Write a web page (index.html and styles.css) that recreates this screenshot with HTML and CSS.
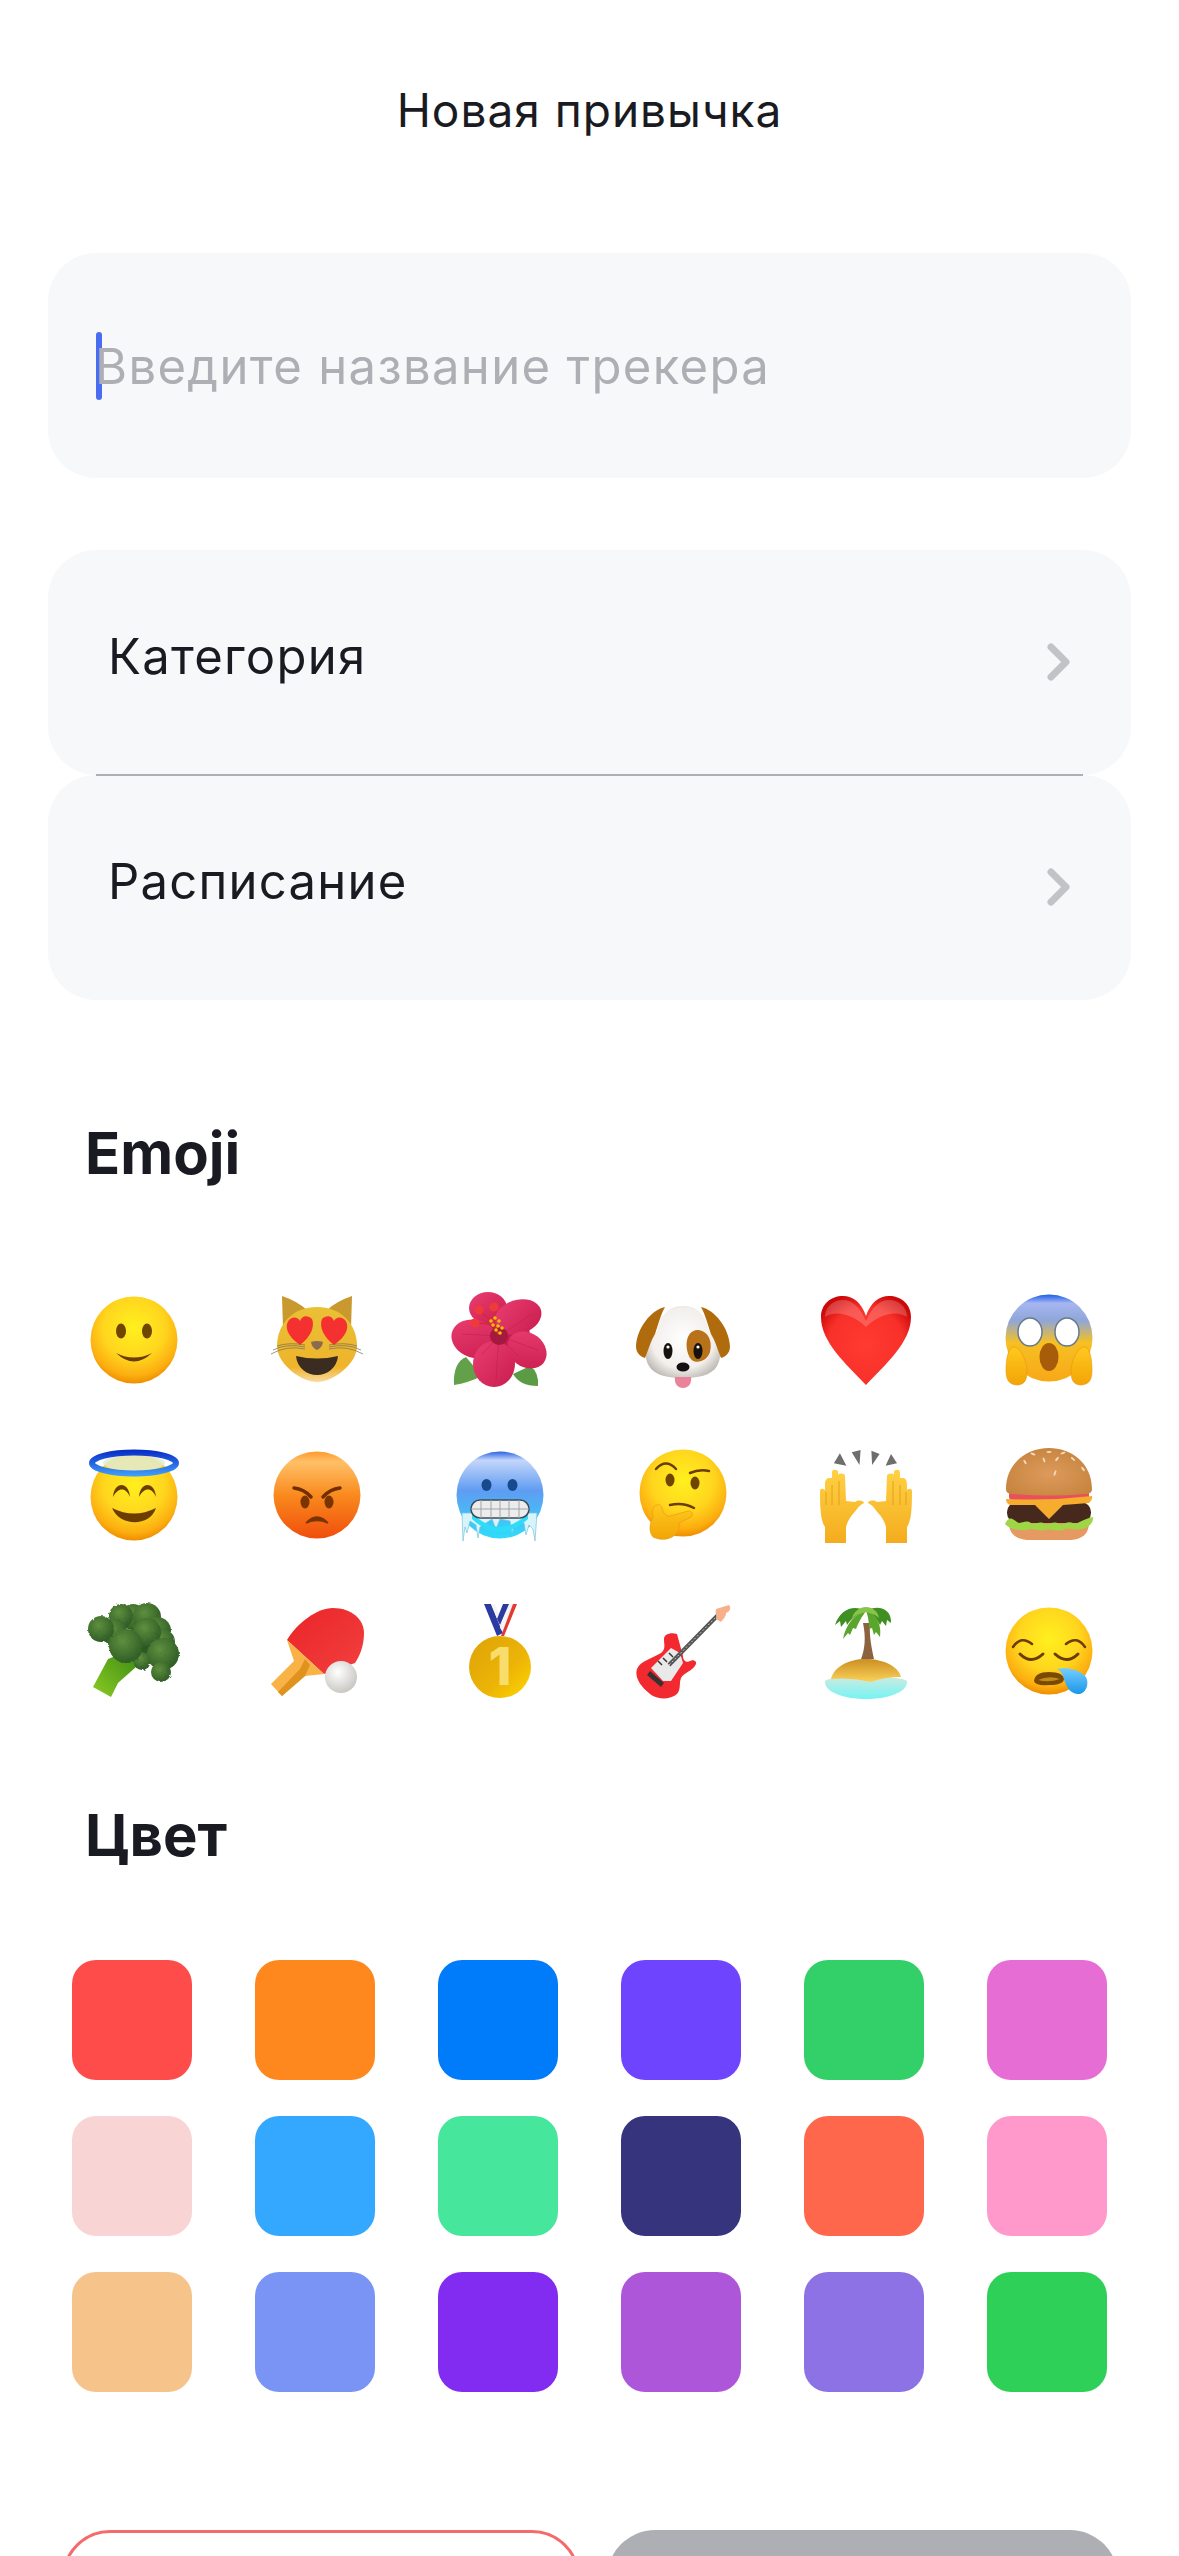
FILE: index.html
```html
<!DOCTYPE html>
<html lang="ru">

<head>
    <meta charset="UTF-8">
    <meta name="viewport" content="width=device-width, initial-scale=1.0">
    <title>Новая привычка</title>

    <link rel="stylesheet" href="styles.css">
</head>

<body>
    <!-- shared gradients for the emoji -->
    <svg class="defs" aria-hidden="true">
        <defs>
            <radialGradient id="face" cx="50%" cy="36%" r="64%">
                <stop offset="0" stop-color="#fff01e" />
                <stop offset=".55" stop-color="#ffd61e" />
                <stop offset=".86" stop-color="#fcae10" />
                <stop offset="1" stop-color="#ee8e00" />
            </radialGradient>
            <linearGradient id="angry" x1="0" y1="0" x2="0" y2="1">
                <stop offset="0" stop-color="#ff9a2e" />
                <stop offset=".12" stop-color="#ffc066" />
                <stop offset=".5" stop-color="#f98a1e" />
                <stop offset="1" stop-color="#f04e0c" />
            </linearGradient>
            <linearGradient id="cold" x1="0" y1="0" x2="0" y2="1">
                <stop offset="0" stop-color="#2a62e6" />
                <stop offset=".1" stop-color="#c4d6fa" />
                <stop offset=".45" stop-color="#5f9cf2" />
                <stop offset="1" stop-color="#2edcfa" />
            </linearGradient>
            <linearGradient id="scream" x1="0" y1="0" x2="0" y2="1">
                <stop offset="0" stop-color="#1c5ce8" />
                <stop offset=".1" stop-color="#a6b6f2" />
                <stop offset=".3" stop-color="#8fa6d8" />
                <stop offset=".55" stop-color="#f6c024" />
                <stop offset="1" stop-color="#f8a816" />
            </linearGradient>
            <linearGradient id="hand" x1="0" y1="0" x2="0" y2="1">
                <stop offset="0" stop-color="#ffc91f" />
                <stop offset="1" stop-color="#f2a406" />
            </linearGradient>
            <linearGradient id="raised" gradientUnits="userSpaceOnUse" x1="0" y1="25" x2="0" y2="100">
                <stop offset="0" stop-color="#ffd146" />
                <stop offset="1" stop-color="#f3ab1c" />
            </linearGradient>
            <linearGradient id="cat" x1="0" y1="0" x2="0" y2="1">
                <stop offset="0" stop-color="#e9c034" />
                <stop offset=".8" stop-color="#eeb42c" />
                <stop offset="1" stop-color="#fbd9a0" />
            </linearGradient>
            <linearGradient id="petal" x1="0" y1="0" x2="1" y2="1">
                <stop offset="0" stop-color="#ea3d70" />
                <stop offset="1" stop-color="#c91d50" />
            </linearGradient>
            <radialGradient id="dog" cx="50%" cy="45%" r="60%">
                <stop offset="0" stop-color="#ffffff" />
                <stop offset=".7" stop-color="#f2efec" />
                <stop offset="1" stop-color="#bdb8b2" />
            </radialGradient>
            <radialGradient id="heart" cx="50%" cy="55%" r="60%">
                <stop offset="0" stop-color="#ff3b30" />
                <stop offset=".7" stop-color="#f8302a" />
                <stop offset="1" stop-color="#cc0a0a" />
            </radialGradient>
            <linearGradient id="halo" gradientUnits="userSpaceOnUse" x1="0" y1="6" x2="0" y2="30">
                <stop offset="0" stop-color="#0a2ec8" />
                <stop offset="1" stop-color="#3f9cf8" />
            </linearGradient>
            <radialGradient id="bun" cx="50%" cy="55%" r="60%">
                <stop offset="0" stop-color="#dd9a5c" />
                <stop offset="1" stop-color="#c6843e" />
            </radialGradient>
            <radialGradient id="floret" cx="40%" cy="35%" r="70%">
                <stop offset="0" stop-color="#5f8f3e" />
                <stop offset="1" stop-color="#2c5a24" />
            </radialGradient>
            <linearGradient id="stem" x1="0" y1="1" x2="1" y2="0">
                <stop offset="0" stop-color="#8ccb24" />
                <stop offset="1" stop-color="#3f8f14" />
            </linearGradient>
            <linearGradient id="blade" x1="0" y1="0" x2="1" y2="1">
                <stop offset="0" stop-color="#ea2427" />
                <stop offset="1" stop-color="#f24040" />
            </linearGradient>
            <radialGradient id="ball" cx="40%" cy="35%" r="70%">
                <stop offset="0" stop-color="#ffffff" />
                <stop offset="1" stop-color="#c6c4c0" />
            </radialGradient>
            <linearGradient id="gold" x1="0" y1="0" x2="1" y2="1">
                <stop offset="0" stop-color="#dca308" />
                <stop offset=".6" stop-color="#edb407" />
                <stop offset="1" stop-color="#ffd800" />
            </linearGradient>
            <linearGradient id="sand" x1="0" y1="0" x2="0" y2="1">
                <stop offset="0" stop-color="#cc8f20" />
                <stop offset="1" stop-color="#fbd25a" />
            </linearGradient>
            <linearGradient id="sea" x1="0" y1="0" x2="0" y2="1">
                <stop offset="0" stop-color="#cdebe0" />
                <stop offset="1" stop-color="#74f4f4" />
            </linearGradient>
            <linearGradient id="drop" x1="0" y1="0" x2="0" y2="1">
                <stop offset="0" stop-color="#74ccff" />
                <stop offset="1" stop-color="#1a98e8" />
            </linearGradient>
            <filter id="rough" x="-5%" y="-5%" width="110%" height="110%">
                <feTurbulence type="fractalNoise" baseFrequency=".35" numOctaves="2" seed="3" />
                <feDisplacementMap in="SourceGraphic" scale="3" />
            </filter>
        </defs>
    </svg>

    <div class="screen">
        <header class="top-bar">
            <h1 class="top-title">Новая привычка</h1>
        </header>

        <div class="name-field">
            <span class="caret"></span>
            <span class="placeholder">Введите название трекера</span>
        </div>

        <div class="menu">
            <div class="menu-row">
                <span class="menu-label">Категория</span>
                <svg class="chevron" viewBox="0 0 24 40">
                    <path d="M4 4 L19 19 L4 34" />
                </svg>
            </div>
            <div class="menu-row with-line">
                <span class="menu-label">Расписание</span>
                <svg class="chevron" viewBox="0 0 24 40">
                    <path d="M4 4 L19 19 L4 34" />
                </svg>
            </div>
        </div>

        <h2 class="section-title emoji-title">Emoji</h2>

        <div class="emoji-grid">
            <!-- smile -->
            <div class="emoji-cell">
                <svg viewBox="0 0 100 100">
                    <circle cx="50" cy="50" r="43.5" fill="url(#face)" />
                    <ellipse cx="37" cy="41" rx="5" ry="7.5" fill="#6f4500" />
                    <ellipse cx="63" cy="41" rx="5" ry="7.5" fill="#6f4500" />
                    <path d="M32 63 Q50 72 68 63 Q50 80 32 63Z" fill="#6b3d00" />
                </svg>
            </div>
            <!-- cat with heart eyes -->
            <div class="emoji-cell">
                <svg viewBox="0 0 100 100">
                    <path d="M16 38 L15 6 Q30 11 40 20Z M84 38 L85 6 Q70 11 60 20Z" fill="#c9982e" />
                    <path d="M50 17 C74 17 90 34 90 56 C90 74 66 92 50 92 C34 92 10 74 10 56 C10 34 26 17 50 17Z" fill="url(#cat)" />
                    <path d="M33 55 C20 46 17 36 22 30 C26 26 31 27 33 31 C35 25 41 25 45 29 C48 36 44 47 33 55Z" fill="#f53030" />
                    <path d="M67 55 C80 46 83 36 78 30 C74 26 69 27 67 31 C65 25 59 25 55 29 C52 36 56 47 67 55Z" fill="#f53030" />
                    <path d="M44 52 Q50 50 56 52 Q55 58 50 60 Q45 58 44 52Z" fill="#8a6a50" />
                    <path d="M4 64 Q20 55 38 59 M6 60 Q20 53 38 57 M10 56 Q22 52 38 55 M96 64 Q80 55 62 59 M94 60 Q80 53 62 57 M90 56 Q78 52 62 55" fill="none" stroke="#776b55" stroke-width=".7" />
                    <path d="M29 66 Q50 71 71 66 C70 78 60 85 50 85 C40 85 30 78 29 66Z" fill="#3a2c20" />
                </svg>
            </div>
            <!-- hibiscus -->
            <div class="emoji-cell">
                <svg viewBox="0 0 100 100">
                    <path d="M4 95 C3 80 8 70 16 67 L32 86 Q18 93 4 95Z" fill="#62a04a" />
                    <path d="M88 96 C75 96 68 92 63 84 L80 76 Q89 82 88 96Z" fill="#5b9b45" />
                    <circle cx="50" cy="46" r="30" fill="#c91d50" />
                    <ellipse cx="38" cy="18" rx="19" ry="16" fill="url(#petal)" />
                    <ellipse cx="68" cy="27" rx="24" ry="17" transform="rotate(-18 68 27)" fill="url(#petal)" />
                    <ellipse cx="77" cy="60" rx="21" ry="17" transform="rotate(38 77 60)" fill="url(#petal)" />
                    <ellipse cx="25" cy="49" rx="24" ry="19" transform="rotate(18 25 49)" fill="url(#petal)" />
                    <ellipse cx="44" cy="74" rx="21" ry="23" fill="url(#petal)" />
                    <path d="M49 46 L12 44 M49 46 L32 64 M49 46 L46 90 M49 46 L68 66 M49 46 L88 60 M49 46 L82 24" stroke="#a81a44" stroke-width="1" opacity=".35" />
                    <circle cx="49" cy="46" r="9" fill="#a5193f" />
                    <path d="M48 44 L45 34 L29 20 M45 34 L44 17 M42 34 L25 33" stroke="#d62a3c" stroke-width="1.8" fill="none" />
                    <circle cx="29" cy="20" r="4.6" fill="#ee3a3a" />
                    <circle cx="44" cy="17" r="4.6" fill="#ee3a3a" />
                    <circle cx="25" cy="33" r="4.6" fill="#ee3a3a" />
                    <g fill="#f8c000">
                        <circle cx="41" cy="31" r="1.8" /><circle cx="45" cy="28" r="1.8" /><circle cx="49" cy="31" r="1.8" />
                        <circle cx="43" cy="35" r="1.8" /><circle cx="48" cy="36" r="1.8" /><circle cx="52" cy="38" r="1.8" />
                        <circle cx="46" cy="40" r="1.8" /><circle cx="50" cy="43" r="1.8" />
                    </g>
                </svg>
            </div>
            <!-- dog -->
            <div class="emoji-cell">
                <svg viewBox="0 0 100 100">
                    <path d="M50 16 C66 16 74 28 76 42 C88 50 90 66 84 76 C78 86 64 88 50 88 C36 88 22 86 16 76 C10 66 12 50 24 42 C26 28 34 16 50 16Z" fill="url(#dog)" />
                    <path d="M32 17 C18 20 4 38 3 56 C3 62 6 66 12 68 C16 58 18 50 22 44 C26 32 28 24 32 17Z" fill="#b06c0c" />
                    <path d="M68 17 C82 20 96 38 97 56 C97 62 94 66 88 68 C84 58 82 50 78 44 C74 32 72 24 68 17Z" fill="#b06c0c" />
                    <path d="M64 40 C74 40 80 50 77 62 C74 72 60 76 56 66 C51 54 54 41 64 40Z" fill="#b8721a" />
                    <ellipse cx="35" cy="61" rx="4.5" ry="8" fill="#16120f" />
                    <ellipse cx="65" cy="61" rx="4.5" ry="8" fill="#16120f" />
                    <circle cx="35" cy="57" r="1.6" fill="#fff" />
                    <circle cx="65" cy="57" r="1.6" fill="#fff" />
                    <path d="M42 87 H58 C59 94 55 98 50 98 C45 98 41 94 42 87Z" fill="#e9839b" />
                    <ellipse cx="50" cy="77" rx="6.5" ry="4.5" fill="#111" />
                </svg>
            </div>
            <!-- heart -->
            <div class="emoji-cell">
                <svg viewBox="0 0 100 100">
                    <path d="M50 95 C30 74 5 52 5 27 C5 14 15 6 27 6 C37 6 45 12 50 26 C55 12 63 6 73 6 C85 6 95 14 95 27 C95 52 70 74 50 95Z" fill="url(#heart)" />
                    <path d="M9 27 C9 16 18 10 27 10 C36 10 44 17 50 31 C56 17 64 10 73 10 C82 10 91 16 91 27 C82 21 66 22 50 37 C34 22 18 21 9 27Z" fill="#fff" opacity=".2" />
                </svg>
            </div>
            <!-- screaming face -->
            <div class="emoji-cell">
                <svg viewBox="0 0 100 100">
                    <circle cx="50" cy="48" r="43.5" fill="url(#scream)" />
                    <ellipse cx="31" cy="42" rx="12" ry="14" fill="#fff" stroke="#667a8a" stroke-width="1.5" />
                    <ellipse cx="68" cy="42" rx="12" ry="14" fill="#fff" stroke="#667a8a" stroke-width="1.5" />
                    <ellipse cx="50" cy="67" rx="9.5" ry="14" fill="#a65c08" />
                    <path d="M14 57 C20 56 27 68 28 80 C28 90 26 94 19 95 C10 95 7 90 7 80 C7 70 9 58 14 57Z" fill="url(#hand)" stroke="#e8960a" stroke-width=".6" />
                    <path d="M86 57 C80 56 73 68 72 80 C72 90 74 94 81 95 C90 95 93 90 93 80 C93 70 91 58 86 57Z" fill="url(#hand)" stroke="#e8960a" stroke-width=".6" />
                </svg>
            </div>

            <!-- halo -->
            <div class="emoji-cell">
                <svg viewBox="0 0 100 100">
                    <circle cx="50" cy="52" r="43.5" fill="url(#face)" />
                    <ellipse cx="50" cy="18" rx="31" ry="8" fill="#e2ead2" opacity=".85" />
                    <ellipse cx="50" cy="18" rx="42" ry="10.5" fill="none" stroke="url(#halo)" stroke-width="6" />
                    <path d="M29 52 C30 36 45 36 46 52 C42 42 34 42 29 52Z M55 52 C56 36 71 36 72 52 C68 42 60 42 55 52Z" fill="#6b3d00" />
                    <path d="M28 63 Q50 74 72 63 C66 82 36 82 28 63Z" fill="#6b3d00" />
                </svg>
            </div>
            <!-- angry -->
            <div class="emoji-cell">
                <svg viewBox="0 0 100 100">
                    <circle cx="50" cy="50" r="43.5" fill="url(#angry)" />
                    <path d="M27 43 Q37 44 44 52 M73 43 Q63 44 56 52" stroke="#6f2f00" stroke-width="3.5" stroke-linecap="round" fill="none" />
                    <ellipse cx="38" cy="57" rx="4.5" ry="6.5" fill="#7a3400" />
                    <ellipse cx="62" cy="57" rx="4.5" ry="6.5" fill="#7a3400" />
                    <path d="M39 78 Q50 66 61 78 Q50 73 39 78Z" fill="#7a3400" stroke="#7a3400" stroke-width="1.5" />
                </svg>
            </div>
            <!-- cold -->
            <div class="emoji-cell">
                <svg viewBox="0 0 100 100">
                    <circle cx="50" cy="50" r="43.5" fill="url(#cold)" />
                    <path d="M12 68 L13 96 L15 82 L17 88 L20 76 L26 80 L28 93 L30 82 L42 74 L46 84 L50 74 L60 76 L62 88 L65 78 L74 78 L76 90 L79 80 L83 84 L85 96 L87 68Z" fill="#d6f4fa" stroke="#79c4de" stroke-width=".7" />
                    <path d="M22 68 Q50 96 78 68 L78 74 Q50 100 22 74Z" fill="#2edcfa" />
                    <ellipse cx="36.5" cy="40" rx="5" ry="6" fill="#17498c" />
                    <ellipse cx="62.5" cy="40" rx="5" ry="6" fill="#17498c" />
                    <rect x="21" y="55" width="58" height="18" rx="9" fill="#ececec" stroke="#3f4a5a" stroke-width="1.5" />
                    <path d="M21 64 H79 M31 55 V73 M41 55 V73 M50 55 V73 M59 55 V73 M69 55 V73" stroke="#a0a4a8" stroke-width="1" />
                </svg>
            </div>
            <!-- thinking -->
            <div class="emoji-cell">
                <svg viewBox="0 0 100 100">
                    <circle cx="50" cy="48" r="43.5" fill="url(#face)" />
                    <path d="M23 24 Q33 13 43 24 M57 28 Q66 24 76 26" stroke="#6b3d00" stroke-width="2.5" stroke-linecap="round" fill="none" />
                    <ellipse cx="37" cy="35" rx="4.5" ry="6.5" fill="#6f4500" />
                    <ellipse cx="62" cy="38" rx="4.5" ry="6.5" fill="#6f4500" />
                    <path d="M37 60 Q50 57 61 63" stroke="#6b3d00" stroke-width="2.5" stroke-linecap="round" fill="none" />
                    <path d="M24 60 C20 60 19 66 20 72 C17 78 15 86 20 92 C28 96 38 95 44 88 C47 83 46 80 46 78 L58 72 C61 69 59 66 55 66 L37 71 C33 72 30 68 29 63 C28 60 26 59 24 60Z" fill="url(#hand)" stroke="#e8960a" stroke-width=".6" />
                </svg>
            </div>
            <!-- raised hands -->
            <div class="emoji-cell">
                <svg viewBox="0 0 100 100">
                    <path d="M23.9 8.3 L17.9 18.3 L30.4 20.7Z M35.7 7.3 L44.6 5 L43.5 20Z M55.4 5.7 L63.6 9 L56.1 20Z M75 9 L81 18.3 L69.6 20.7Z" fill="#6e6e6e" />
                    <g id="raised-left" fill="url(#raised)">
                        <path d="M4 46 C4 43 9 43 9 46 V40 C9 36 10 33 13 33 H16 V27 C16 24 22 24 22 27 V30 C22 28 29 28 29 31 L30 56 L39 57 C43 54 48 56 48 58 C43 60 40 66 36 70 C33 74 31 78 30 82 V98 H9 V82 C5 76 4 66 4 46Z" />
                    </g>
                    <use href="#raised-left" transform="translate(100 0) scale(-1 1)" />
                    <path d="M10 47 V60 M16 40 V60 M23 36 V60 M90 47 V60 M84 40 V60 M77 36 V60" stroke="#dd9a10" stroke-width=".8" />
                </svg>
            </div>
            <!-- burger -->
            <div class="emoji-cell">
                <svg viewBox="0 0 100 100">
                    <path d="M10 78 H90 C90 88 84 94 72 95 H28 C16 94 10 88 10 78Z" fill="#e69a62" />
                    <rect x="10" y="46" width="80" height="9" rx="3" fill="#e8505b" />
                    <rect x="8" y="57" width="84" height="21" rx="10" fill="#46281c" />
                    <path d="M6 79 C10 70 14 74 18 77 C22 80 26 74 32 78 C36 81 40 75 46 79 C50 81 54 75 60 79 C64 81 68 75 74 78 C78 80 84 74 94 72 C95 78 88 84 82 84 C76 86 70 82 64 85 C58 87 52 83 46 85 C40 87 34 82 28 85 C22 86 10 84 6 79Z" fill="#9ed645" />
                    <path d="M7 54 Q50 56 93 51 Q94 55 90 58 L64 60 L50 74 L36 60 L11 60 Q7 58 7 54Z" fill="#f6ac2c" />
                    <path d="M7 44 C7 18 28 3 50 3 C72 3 93 18 93 44 C93 48 90 49 86 49 Q50 52 14 49 C10 49 7 48 7 44Z" fill="url(#bun)" />
                    <g fill="#f1dcc0">
                        <ellipse cx="34" cy="9" rx="2.6" ry="1" transform="rotate(25 34 9)" />
                        <ellipse cx="50" cy="7" rx="2.6" ry="1" />
                        <ellipse cx="64" cy="8" rx="2.6" ry="1" transform="rotate(-20 64 8)" />
                        <ellipse cx="26" cy="17" rx="2.6" ry="1" transform="rotate(60 26 17)" />
                        <ellipse cx="45" cy="15" rx="2.6" ry="1" transform="rotate(70 45 15)" />
                        <ellipse cx="58" cy="14" rx="2.6" ry="1" transform="rotate(-50 58 14)" />
                        <ellipse cx="74" cy="14" rx="2.6" ry="1" transform="rotate(40 74 14)" />
                        <ellipse cx="56" cy="28" rx="3" ry="1" transform="rotate(-70 56 28)" />
                        <ellipse cx="84" cy="24" rx="2.6" ry="1" transform="rotate(50 84 24)" />
                    </g>
                </svg>
            </div>

            <!-- broccoli -->
            <div class="emoji-cell">
                <svg viewBox="0 0 100 100">
                    <path d="M9 86 L24 58 L34 54 L52 60 L52 66 L34 82 L27 96Z" fill="url(#stem)" />
                    <g filter="url(#rough)">
                        <circle cx="60" cy="42" r="18" fill="#2c5a24" />
                        <circle cx="49" cy="16" r="13" fill="url(#floret)" />
                        <circle cx="37" cy="15" r="12" fill="url(#floret)" />
                        <circle cx="63" cy="16" r="14" fill="url(#floret)" />
                        <circle cx="73" cy="30" r="14" fill="url(#floret)" />
                        <circle cx="78" cy="41" r="13" fill="url(#floret)" />
                        <circle cx="30" cy="31" r="13" fill="url(#floret)" />
                        <circle cx="17" cy="28" r="13" fill="url(#floret)" />
                        <circle cx="63" cy="31" r="14" fill="url(#floret)" />
                        <circle cx="58" cy="60" r="9" fill="url(#floret)" />
                        <circle cx="79" cy="53" r="16" fill="url(#floret)" />
                        <circle cx="77" cy="71" r="10" fill="url(#floret)" />
                        <circle cx="42" cy="45" r="17" fill="url(#floret)" />
                    </g>
                </svg>
            </div>
            <!-- ping pong -->
            <div class="emoji-cell">
                <svg viewBox="0 0 100 100">
                    <path d="M20 39 C30 22 50 7 66 7 C84 7 97 18 97 32 C97 46 92 56 88 62 L57 73Z" fill="url(#blade)" />
                    <path d="M20 39 L57 73 L38 75 L15 95 L4 83 L27 60Z" fill="#f8b246" />
                    <path d="M38 58 L43 64 L38 75 L15 95 L11 91 L33 68Z" fill="#e0921e" />
                    <circle cx="74" cy="76" r="16" fill="url(#ball)" />
                </svg>
            </div>
            <!-- medal -->
            <div class="emoji-cell">
                <svg viewBox="0 0 100 100">
                    <path d="M34 3 H41 L53 32 L47 35Z" fill="#2a3aa0" />
                    <path d="M41 3 H45 L54 24 L52 30Z" fill="#f4f4f4" />
                    <path d="M59 3 H63 L53 31 L50 27Z" fill="#f4f4f4" />
                    <path d="M53 3 H59 L50 24 L47 18Z" fill="#2a3aa0" />
                    <path d="M63 3 H67 L54 35 H51Z" fill="#e23a2e" />
                    <circle cx="50" cy="66" r="31" fill="url(#gold)" />
                    <text class="medal-digit" x="50" y="84" text-anchor="middle">1</text>
                </svg>
            </div>
            <!-- guitar -->
            <div class="emoji-cell">
                <svg viewBox="0 0 100 100">
                    <path d="M44 33 C38 31 31 33 31 38 C31 44 33 48 28 52 C20 57 7 60 4 68 C1 78 10 88 20 95 C28 99 38 98 44 93 C48 89 46 82 48 77 C50 72 60 70 63 63 C64 60 60 58 57 60 C54 62 50 60 50 55Z" fill="#f22a30" />
                    <path d="M18 67 L38 47 L47 52 L50 62 L38 80 L30 80Z" fill="#e9e9e9" />
                    <path d="M17 70 L31 82 L28 86 L14 74Z" fill="#333" />
                    <line x1="36" y1="64" x2="87" y2="12" stroke="#555" stroke-width="4" />
                    <line x1="36" y1="64" x2="87" y2="12" stroke="#ccc" stroke-width="1" stroke-dasharray="2 2" />
                    <path d="M25 60 L29 64 M30 57 L34 61 M36 52 L40 56" stroke="#333" stroke-width="1.5" />
                    <path d="M83 8 L96 4 C99 8 96 11 93 12 C93 16 90 18 88 21 L83 18 C84 14 82 12 83 8Z" fill="#f6b08a" />
                </svg>
            </div>
            <!-- island -->
            <div class="emoji-cell">
                <svg viewBox="0 0 100 100">
                    <path d="M9 80 C14 74 86 74 91 80 C92 92 70 98 50 98 C30 98 8 92 9 80Z" fill="url(#sea)" />
                    <path d="M15 78 C18 66 32 58 50 58 C68 58 83 66 85 76 Q68 76 55 81 Q35 76 15 78Z" fill="url(#sand)" />
                    <path d="M47 22 H54 C53 36 56 48 58 58 H45 C49 48 50 36 47 22Z" fill="#8b6340" />
                    <path d="M50 10 C38 3 24 8 19 24 L24 20 L25 26 L30 20 L31 24 C36 16 44 12 50 10Z" fill="#3f8f22" />
                    <path d="M50 10 C62 3 76 8 75 22 L71 19 L70 25 L66 20 L64 24 C60 16 56 12 50 10Z" fill="#3f8f22" />
                    <path d="M50 10 C40 12 30 22 27 38 L32 32 L34 34 L37 27 L40 28 C42 22 47 14 50 10Z" fill="#5aa62c" />
                    <path d="M50 10 C60 12 66 24 64 36 L60 31 L58 34 L56 27 L53 28 C53 22 52 14 50 10Z" fill="#5aa62c" />
                    <path d="M50 6 C44 6 38 10 36 17 C41 13 47 12 50 11 C53 12 59 13 63 17 C62 10 56 6 50 6Z" fill="#8ac34a" />
                </svg>
            </div>
            <!-- sleepy -->
            <div class="emoji-cell">
                <svg viewBox="0 0 100 100">
                    <circle cx="50" cy="50" r="43.5" fill="url(#face)" />
                    <path d="M14 46 Q22 34 33 43 M67 43 Q78 34 86 46" stroke="#6b3d00" stroke-width="2.5" stroke-linecap="round" fill="none" />
                    <path d="M21 53 Q32 64 44 53 M56 53 Q68 64 79 53" stroke="#6b3d00" stroke-width="3" stroke-linecap="round" fill="none" />
                    <path d="M35 80 Q36 71 50 71 Q64 71 65 78 Q64 84 50 84 Q36 85 35 80Z" fill="#7a4a00" />
                    <path d="M39 79 Q50 74 61 78 Q50 82 39 79Z" fill="#c08a1e" />
                    <path d="M58 68 C66 66 80 68 87 76 C91 84 86 94 78 93 C70 92 67 84 65 78 C64 73 62 70 58 68Z" fill="url(#drop)" />
                </svg>
            </div>
        </div>

        <h2 class="section-title color-title">Цвет</h2>

        <div class="color-grid">
            <div class="swatch c1"></div>
            <div class="swatch c2"></div>
            <div class="swatch c3"></div>
            <div class="swatch c4"></div>
            <div class="swatch c5"></div>
            <div class="swatch c6"></div>
            <div class="swatch c7"></div>
            <div class="swatch c8"></div>
            <div class="swatch c9"></div>
            <div class="swatch c10"></div>
            <div class="swatch c11"></div>
            <div class="swatch c12"></div>
            <div class="swatch c13"></div>
            <div class="swatch c14"></div>
            <div class="swatch c15"></div>
            <div class="swatch c16"></div>
            <div class="swatch c17"></div>
            <div class="swatch c18"></div>
        </div>

        <div class="actions">
            <div class="btn btn-cancel"></div>
            <div class="btn btn-create"></div>
        </div>
    </div>
</body>

</html>
```

FILE: styles.css
```css
html,
body {
    margin: 0;
    background-color: #fff;
}

body {
    font-family: 'Inter', 'Roboto', sans-serif;
    color: #1a1b22;
}

.defs {
    position: absolute;
    width: 0;
    height: 0;
}

.screen {
    width: 1179px;
    height: 2556px;
    overflow: hidden;
}

.top-bar {
    height: 220px;
    display: flex;
    justify-content: center;
    align-items: center;
    margin-bottom: 33px;
}

.top-title {
    margin: 0;
    font-size: 46px;
    font-weight: 400;
    letter-spacing: 1px;
}

.name-field {
    height: 225px;
    margin: 0 48px 72px 48px;
    padding-left: 48px;
    display: flex;
    align-items: center;
    background-color: #f7f8f9;
    border-radius: 48px;
}

.caret {
    width: 6px;
    height: 68px;
    margin-right: -7px;
    background-color: #4a6cf0;
    border-radius: 3px;
}

.placeholder {
    padding-top: 2px;
    font-size: 49px;
    letter-spacing: 1.35px;
    color: #aeafb4;
}

.menu {
    margin: 0 48px;
}

.menu-row {
    position: relative;
    height: 225px;
    padding: 0 60px;
    display: flex;
    justify-content: space-between;
    align-items: center;
    background-color: #f7f8f9;
    border-radius: 48px;
}

.menu-label {
    margin-bottom: 13px;
    font-size: 49px;
    letter-spacing: 1.25px;
}

.with-line::before {
    content: '';
    position: absolute;
    top: -1px;
    left: 48px;
    right: 48px;
    height: 2px;
    background-color: #aeafb4;
}

.chevron {
    width: 24px;
    height: 40px;
    fill: none;
    stroke: #c2c3c7;
    stroke-width: 7;
    stroke-linecap: round;
    stroke-linejoin: round;
}

.section-title {
    margin: 0;
    padding-left: 85px;
    font-size: 58px;
    font-weight: 700;
    line-height: 70px;
}

.emoji-title {
    margin-top: 118px;
    margin-bottom: 74px;
}

.emoji-grid {
    padding-left: 42px;
    display: grid;
    grid-template-columns: repeat(6, 183px);
    grid-auto-rows: 155.5px;
}

.emoji-cell {
    display: flex;
    justify-content: center;
    align-items: center;
}

.emoji-cell svg {
    width: 100px;
    height: 100px;
}

.medal-digit {
    font-family: 'Inter', sans-serif;
    font-size: 52px;
    font-weight: 800;
    fill: #f8dd6c;
}

.color-title {
    margin-top: 71px;
    margin-bottom: 90px;
}

.color-grid {
    padding-left: 72px;
    display: grid;
    grid-template-columns: repeat(6, 120px);
    grid-auto-rows: 120px;
    column-gap: 63px;
    row-gap: 36px;
}

.swatch {
    border-radius: 24px;
}

.c1 { background-color: #fd4c49; }
.c2 { background-color: #ff881e; }
.c3 { background-color: #007bfa; }
.c4 { background-color: #6e44fe; }
.c5 { background-color: #33cf69; }
.c6 { background-color: #e66dd4; }
.c7 { background-color: #f9d4d4; }
.c8 { background-color: #34a7fe; }
.c9 { background-color: #46e69d; }
.c10 { background-color: #35347c; }
.c11 { background-color: #ff674d; }
.c12 { background-color: #ff99cc; }
.c13 { background-color: #f6c48b; }
.c14 { background-color: #7994f5; }
.c15 { background-color: #832cf1; }
.c16 { background-color: #ad56da; }
.c17 { background-color: #8d72e6; }
.c18 { background-color: #2fd058; }

.actions {
    margin-top: 138px;
    padding: 0 61px 0 62px;
    display: flex;
    gap: 27px;
}

.btn {
    flex: 1;
    height: 180px;
    box-sizing: border-box;
    border-radius: 48px;
}

.btn-cancel {
    border: 3px solid #f56b6c;
}

.btn-create {
    background-color: #aeafb4;
}
```
